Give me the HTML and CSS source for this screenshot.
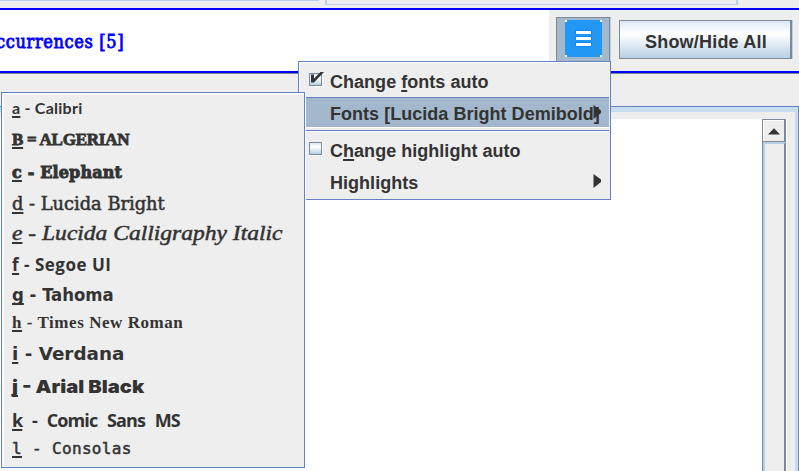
FILE: index.html
```
<!DOCTYPE html>
<html lang="en">
<head>
<meta charset="utf-8">
<title>Occurrences</title>
<link rel="stylesheet" href="styles.css">
</head>
<body>
<div class="window">
  <div class="tabs"><div class="tab tab-left"></div><div class="tab tab-right"></div></div>
  <header class="bar">
    <div class="title"><span>ccurrences [5]</span></div>
    <button class="menu-button" aria-label="Menu">
      <svg width="37" height="37" viewBox="0 0 37 37" shape-rendering="crispEdges">
        <path fill="#2196f3" d="M0 0H37V37H0Z"/>
        <path fill="#fff" d="M0 0H2V2H0ZM35 0H37V2H35ZM0 35H2V37H0ZM35 35H37V37H35Z"/>
        <path fill="#0d87f5" d="M10 10H27V27H10Z"/>
        <path fill="#2196f3" d="M10 14H27V16H10ZM10 20H27V22H10Z"/>
        <path fill="#fff" d="M11 11H26V14H11ZM11 17H26V20H11ZM11 23H26V26H11Z"/>
      </svg>
    </button>
    <button class="toggle"><span>Show/Hide All</span></button>
  </header>
  <main class="content">
    <div class="pane">
      <div class="page"></div>
      <div class="scrollbar">
        <div class="arrow-up"><svg width="12" height="7" viewBox="0 0 12 7"><path fill="#333" d="M6 0.3L12 6.5H0Z"/></svg></div>
        <div class="thumb"></div>
      </div>
    </div>
  </main>
</div>

<div class="menu">
  <div class="item check">
    <svg class="box" width="16" height="17" viewBox="0 0 16 17"><use href="#cb"/><path fill="#333" d="M3 4.5H6V8.5L12.5 2H16L6 12.5H3Z"/></svg>
    <span class="label">Change <u>f</u>onts auto</span>
  </div>
  <div class="item selected"><span class="label">Fonts [Lucida Bright Demibold]</span><svg class="arrow" width="8" height="14" viewBox="0 0 8 14"><path fill="#333" d="M0.5 0L8 5.5V8L0.5 14Z"/></svg></div>
  <div class="separator"></div>
  <div class="item check second">
    <svg class="box" width="16" height="17" viewBox="0 0 16 17">
      <defs>
        <linearGradient id="g" x2="0" y2="1"><stop stop-color="#dce9f4"/><stop offset=".35" stop-color="#fff"/><stop offset="1" stop-color="#b8cfe5"/></linearGradient>
        <g id="cb"><path fill="#fff" d="M1 3H15V17H1Z"/><path fill="#7a8a99" d="M1 3H14V16H1Z"/><path fill="url(#g)" d="M2 4H13V15H2Z"/></g>
      </defs>
      <use href="#cb"/>
    </svg>
    <span class="label">C<u>h</u>ange highlight auto</span>
  </div>
  <div class="item last"><span class="label">Highlights</span><svg class="arrow" width="8" height="14" viewBox="0 0 8 14"><path fill="#333" d="M0.5 0L8 5.5V8L0.5 14Z"/></svg></div>
</div>

<div class="submenu">
  <div class="font calibri"><span><u>a</u> - Calibri</span></div>
  <div class="font algerian"><span><u>B</u> = ALGERIAN</span></div>
  <div class="font elephant"><span><u>c</u> - Elephant</span></div>
  <div class="font bright"><span><u>d</u> - Lucida Bright</span></div>
  <div class="font calligraphy"><span><u>e</u> - Lucida Calligraphy Italic</span></div>
  <div class="font segoe"><span><u>f</u> - Segoe UI</span></div>
  <div class="font tahoma"><span><u>g</u> - Tahoma</span></div>
  <div class="font times"><span><u>h</u> - Times New Roman</span></div>
  <div class="font verdana"><span><u>i</u> - Verdana</span></div>
  <div class="font black"><span><u>j</u> - Arial Black</span></div>
  <div class="font comic"><span><u>k</u> - Comic Sans MS</span></div>
  <div class="font consolas"><span><u>l</u> - Consolas</span></div>
</div>
</body>
</html>
```
FILE: styles.css
```
* { box-sizing: border-box; }
body { margin: 0; width: 799px; height: 471px; overflow: hidden; background: #eee; color: #333; font: bold 18px "Liberation Sans", sans-serif; }
svg { display: block; flex: none; }
u { text-decoration: underline; text-decoration-thickness: 1.5px; text-underline-offset: 2px; text-decoration-skip-ink: none; }
.window { display: flex; flex-direction: column; height: 471px; }

.tabs { display: flex; gap: 6px; height: 8px; }
.tab-left { width: 319px; height: 1px; background: #b8cfe5; }
.tab-right { width: 413px; height: 5px; border: solid #b8cfe5; border-width: 0 2px 1px; }

.bar { display: flex; flex: none; height: 65px; border: solid #00f; border-width: 2px 0; box-shadow: 0 1px #7a8a99; }
.title { width: 549px; background: #fff; color: #00f; padding-top: 20px; line-height: 24px; font-family: "DejaVu Serif Condensed", "DejaVu Serif", serif; font-size: 18px; font-weight: 400; white-space: nowrap; -webkit-text-stroke: .8px #00f; }
.title span { display: inline-block; margin-left: -4px; letter-spacing: .65px; }
.menu-button { display: flex; align-items: flex-start; width: 55px; height: 60px; margin: 7px 0 0 7px; padding: 2px 8px; border: 1px solid #7a8a99; border-right-color: #b8cfe5; background: #a3b8cc; box-shadow: inset -1px 0 #7a8a99; }
.toggle { width: 173px; height: 39px; margin: 10px 0 0 8px; padding: 5px 0 0 2px; border: 1px solid #7a8a99; border-right-width: 2px; background: linear-gradient(#dde8f3, #fff 32%, #fff 36%, #b8cfe5); box-shadow: 1px 0 #b8cfe5; color: #333; font: bold 18px "Liberation Sans", sans-serif; letter-spacing: .2px; }

.content { flex: 1; margin-top: 33px; border-top: 1px solid #6382bf; border-right: 1px solid #7a8a99; }
.pane { display: flex; height: 100%; border-top: 5px solid #c8ddf2; border-right: 3px solid #c8ddf2; box-shadow: inset 0 7px #eee; padding-top: 7px; }
.page { width: 762px; background: #fff; }
.scrollbar { display: flex; flex-direction: column; width: 25px; border-left: 1px solid #7a8a99; border-right: 1px solid #fff; }
.arrow-up { display: grid; place-items: center; height: 23px; border-top: 1px solid #7a8a99; border-right: 2px solid #7a8a99; box-shadow: inset 1px 1px #fff; }
.thumb { flex: 1; border: solid #b8cfe5; border-width: 2px 0 0 2px; border-right: 2px solid #7a8a99; box-shadow: 0 -1px #7a8a99; }

.menu { position: absolute; left: 298px; top: 61px; width: 313px; height: 139px; border: 1px solid #6382bf; background: #eee; box-shadow: inset 1px 1px #fff; padding: 1px; }
.item { display: flex; align-items: center; height: 32px; padding-left: 30px; line-height: 32px; white-space: nowrap; letter-spacing: .03px; }
.item .label { display: block; width: 271px; flex: none; }
.check { padding-left: 8px; }
.box { margin: -8px 6px 0 0; }
.item:first-child { height: 34px; padding-top: 4px; }
.selected { height: 30px; padding-top: 3px; background: #a3b8cc; border-top: 1px solid #6382bf; }
.item.selected .label, .item.last .label { width: 263px; }
.selected .arrow { margin-top: -5px; }
.separator { height: 4px; border-top: 1px solid #fff; border-bottom: 1px solid #6382bf; box-shadow: 0 1px #fff; }
.second { height: 36px; padding-top: 4px; }
.last .arrow { margin-top: -4px; }

.submenu { position: absolute; left: 1px; top: 92px; width: 304px; height: 376px; padding: 3px 0 0 10px; border: 1px solid #6382bf; background: #eee; box-shadow: inset 2px 2px #fafafa, 1px 1px #fff; }
.font { height: 26px; line-height: 26px; font-size: 15px; white-space: nowrap; }
.font span { display: inline-block; line-height: 0; transform-origin: 0 50%; }
.calibri span { font: bold 16px/0 Lato, sans-serif; letter-spacing: .25px; }
.algerian { margin-top: 5px; }
.algerian span { font: bold 17px/0 "Liberation Serif", serif; letter-spacing: -.25px; -webkit-text-stroke: .8px #333; }
.elephant { margin-top: 7px; }
.elephant span { font: bold 16px/0 "DejaVu Serif", serif; letter-spacing: .15px; -webkit-text-stroke: .9px #333; }
.bright { margin-top: 6px; }
.bright span { font: 18px/0 "DejaVu Serif Condensed", "DejaVu Serif", serif; transform: scaleX(1.1); -webkit-text-stroke: .5px #333; }
.calligraphy { margin-top: 4px; }
.calligraphy span { font: italic 21px/0 "Liberation Serif", serif; transform: scaleX(1.12); -webkit-text-stroke: .5px #333; }
.segoe { margin-top: 5px; }
.segoe span { font: bold 17px/0 "Open Sans", sans-serif; letter-spacing: .5px; }
.tahoma { margin-top: 4px; }
.tahoma span { font: bold 17px/0 "DejaVu Sans Condensed", "DejaVu Sans", sans-serif; transform: scaleX(1.08); }
.times { margin-top: 1px; }
.times span { font: bold 17px/0 "Liberation Serif", serif; letter-spacing: .55px; }
.verdana { margin-top: 6px; }
.verdana span { font: bold 17px/0 "DejaVu Sans", sans-serif; transform: scaleX(1.08); }
.black { margin-top: 7px; }
.black span { font: 900 18px/0 Inter, sans-serif; transform: scaleX(1.12); }
.comic { margin-top: 8px; }
.comic span { font: bold 18px/0 "Open Sans", sans-serif; word-spacing: 6px; letter-spacing: -.9px; }
.consolas { margin-top: 1px; }
.consolas span { font: 16px/0 "DejaVu Sans Mono", monospace; letter-spacing: .35px; -webkit-text-stroke: .5px #333; }
```
